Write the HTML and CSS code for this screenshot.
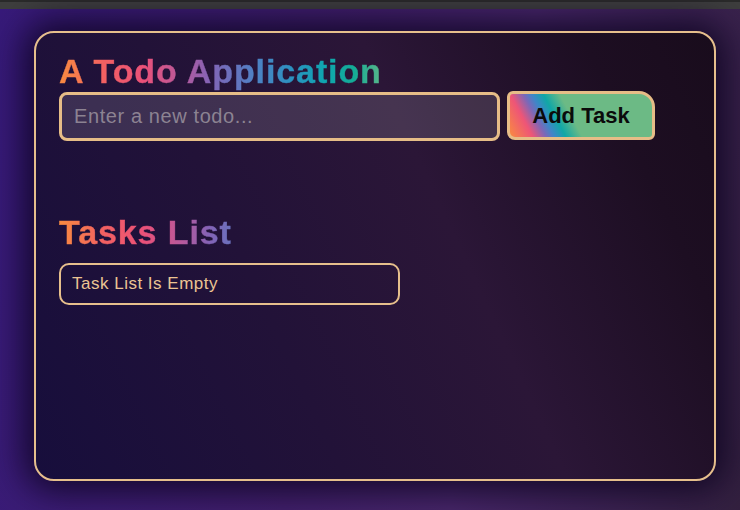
FILE: index.html
```html
<!DOCTYPE html>
<html lang="en">
<head>
<meta charset="utf-8">
<title>A Todo Application</title>
<link rel="stylesheet" href="styles.css">
</head>
<body>
<div class="topbar"></div>
<main class="stage">
  <section class="card">
    <h1 class="grad-title">A Todo Application</h1>
    <div class="add-row">
      <input class="todo-input" type="text" placeholder="Enter a new todo...">
      <button class="add-btn" type="button">Add Task</button>
    </div>
    <h2 class="grad-title list-title">Tasks List</h2>
    <div class="task-box">Task List Is Empty</div>
  </section>
</main>
</body>
</html>
```
FILE: styles.css
```css
html, body {
  margin: 0;
  padding: 0;
  height: 100%;
}
body {
  font-family: "Liberation Sans", Arial, sans-serif;
  background: linear-gradient(100deg, #371a7a 0%, #42206c 45%, #48276a 65%, #33203f 100%);
  overflow: hidden;
}
.topbar {
  height: 7px;
  background: #3e3e3e;
  border-top: 2px solid #2a2a2a;
}
.stage {
  padding: 22px 0 0 34px;
}
.card {
  box-sizing: border-box;
  width: 682px;
  height: 450px;
  border: 2px solid #e6bf8c;
  border-radius: 20px;
  padding: 19px 23px;
  background: linear-gradient(65deg, #170e3c 0%, #221238 35%, #2b1637 60%, #1d0e22 85%, #190c1c 100%);
  box-shadow: 0 0 34px 10px rgba(12, 4, 30, 0.85);
}
.grad-title {
  margin: 0;
  font-size: 34px;
  font-weight: 700;
  letter-spacing: 0.9px;
  line-height: 39px;
  -webkit-text-stroke: 0.4px transparent;
  background: linear-gradient(90deg, #f98b40 0px, #f26062 45px, #ea5179 85px, #b45a9e 125px, #8463b6 150px, #4f80c4 195px, #2a93c0 235px, #0fa5b0 265px, #14ac96 295px, #6cb985 330px);
  -webkit-background-clip: text;
  background-clip: text;
  color: transparent;
}
.add-row {
  display: flex;
  align-items: flex-start;
  gap: 7px;
  margin-top: 1px;
}
.todo-input {
  box-sizing: border-box;
  width: 441px;
  height: 49px;
  border: 3px solid #e6bd87;
  border-radius: 8px;
  padding: 0 12px;
  background: rgba(255, 255, 255, 0.13);
  font-family: "Liberation Sans", Arial, sans-serif;
  font-size: 20px;
  letter-spacing: 0.6px;
  color: #e8e0ee;
  outline: none;
}
.todo-input::placeholder {
  color: #8c8392;
}
.add-btn {
  box-sizing: border-box;
  width: 148px;
  height: 49px;
  margin-top: -1px;
  border: 3px solid #e6bd87;
  border-radius: 6px 16px 6px 8px;
  background: linear-gradient(62deg, #f98b40 0%, #ee5577 14%, #7b68b8 22%, #3f86c8 27%, #10a7a6 34%, #6cba85 44%, #6cba85 100%);
  font-family: "Liberation Sans", Arial, sans-serif;
  font-size: 22px;
  font-weight: 700;
  color: #0b0b0b;
  padding: 0;
}
.list-title {
  margin-top: 72px;
}
.task-box {
  box-sizing: border-box;
  width: 341px;
  height: 42px;
  margin-top: 11px;
  border: 2px solid #e6bf8c;
  border-radius: 10px;
  padding: 0 11px;
  display: flex;
  align-items: center;
  font-size: 17px;
  letter-spacing: 0.5px;
  color: #ebc493;
}
```
